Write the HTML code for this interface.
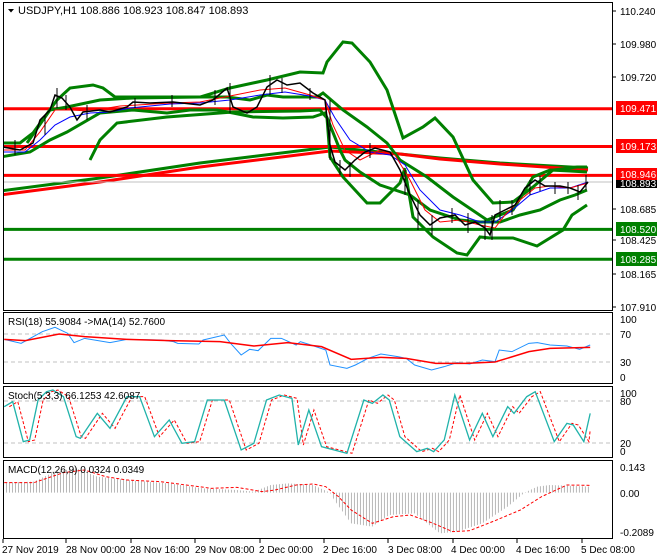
<!DOCTYPE html>
<html><head><meta charset="utf-8"><style>
html,body{margin:0;padding:0;background:#fff;}
svg{display:block;font-family:"Liberation Sans",sans-serif;}
</style></head><body>
<svg width="660" height="560" viewBox="0 0 660 560" xmlns="http://www.w3.org/2000/svg">
<defs>
<pattern id="hist" width="7.09" height="30" patternUnits="userSpaceOnUse"><rect x="0" y="0" width="2.36" height="30" fill="#b8b8b8"/></pattern>
<clipPath id="mc"><rect x="4" y="3" width="608" height="307"/></clipPath>
</defs>
<rect width="660" height="560" fill="#fff"/>
<rect x="3.5" y="2.5" width="609" height="308" fill="none" stroke="#000"/>
<rect x="3.5" y="312.5" width="609" height="71" fill="none" stroke="#000"/>
<rect x="3.5" y="386.5" width="609" height="71" fill="none" stroke="#000"/>
<rect x="3.5" y="460.5" width="609" height="78" fill="none" stroke="#000"/>

<g clip-path="url(#mc)" fill="none">
<polyline stroke="#008000" stroke-width="3" points="0,191 100,178 200,163 330,147 440,158 500,163 588,168"/>
<polyline stroke="#ff0000" stroke-width="3" points="0,195 100,182 200,167 330,151 400,154 440,159 500,164 588,170"/>
<line x1="0" y1="108.7" x2="612" y2="108.7" stroke="#ff0000" stroke-width="3"/>
<line x1="0" y1="146.5" x2="612" y2="146.5" stroke="#ff0000" stroke-width="3"/>
<line x1="0" y1="175.4" x2="612" y2="175.4" stroke="#ff0000" stroke-width="3"/>
<line x1="0" y1="182" x2="612" y2="182" stroke="#c0c0c0" stroke-width="1"/>
<line x1="0" y1="229.4" x2="612" y2="229.4" stroke="#008000" stroke-width="3"/>
<line x1="0" y1="259.3" x2="612" y2="259.3" stroke="#008000" stroke-width="3"/>
<polyline stroke="#008000" stroke-width="3" points="3,143 20,143 33,133 57,100 70,88 93,85 103,88 115,97 200,97 230,88 267,80 300,72 323,73 327,62 343,42 352,43 370,62 387,90 403,138 423,127 435,118 453,137 473,180 493,203 513,202 533,187 553,170 577,167 587,167"/>
<polyline stroke="#008000" stroke-width="3" points="90,160 100,140 117,123 167,117 233,112 300,111 320,110 327,118 330,157 343,177 367,203 380,203 400,183 405,168"/>
<polyline stroke="#008000" stroke-width="3" points="405,170 413,217 433,237 457,253 467,255 480,237 490,238 513,238 537,246 563,230 572,215 587,205"/>
<polyline stroke="#008000" stroke-width="3" points="27,143 50,110 67,107 100,100 133,98 200,97 227,97 250,100 267,95 283,97 317,97 323,93 343,110 367,127 387,143 400,160 427,177 453,197 487,220 513,210 533,177 550,170 570,171 587,172"/>
<polyline stroke="#008000" stroke-width="3" points="0,157 30,152 50,140 67,132 100,113 133,110 167,113 190,110 217,110 233,113 253,117 283,118 313,117 325,113 330,125 340,150 345,160 360,172 380,185 395,190 410,195 430,210 460,220 480,222 500,222 520,215 540,210 560,200 575,195 587,190"/>
<polyline stroke="#0000ff" stroke-width="1" points="3,152 25,152 40,140 55,125 70,117 90,113 110,112 130,108 170,104 200,103 230,100 260,95 285,92 310,96 325,100 335,118 350,140 370,152 390,155 405,165 420,190 440,210 460,215 480,222 495,222 510,212 530,195 550,188 570,188 588,182"/>
<polyline stroke="#ff0000" stroke-width="1" points="3,150 25,150 40,132 55,110 70,110 90,111 120,106 170,103 200,102 230,96 260,90 285,88 310,95 325,100 333,125 345,150 360,160 380,150 395,155 410,180 425,210 440,222 460,220 480,225 495,228 505,215 520,200 535,188 550,186 570,188 588,183"/>
<polyline stroke="#000" stroke-width="1.5" points="3,147 20,150 33,143 40,120 50,110 55,95 62,98 70,107 77,120 83,112 100,110 110,112 127,107 133,102 150,103 173,102 200,105 213,100 227,88 233,107 247,113 257,107 267,87 277,80 287,85 300,83 313,93 325,100 330,145 335,162 345,170 355,160 365,152 375,148 390,152 400,170 410,195 420,215 430,225 440,218 455,215 465,225 475,222 485,228 490,235 495,215 505,210 515,205 525,188 535,180 545,186 560,186 570,188 580,192 588,182"/>
<path stroke="#000" stroke-width="1" d="M15,140v15M45,115v20M57,88v20M66,95v15M87,105v15M135,98v10M172,95v12M215,90v15M230,83v30M270,75v20M282,78v15M310,88v12M330,100v60M340,160v15M350,162v15M370,143v15M405,170v25M418,200v30M432,215v20M452,208v15M468,213v20M485,220v20M492,215v25M500,200v20M512,200v15M530,180v15M540,176v15M555,182v12M568,182v12M578,185v15M586,175v15"/>
</g>

<path d="M8,9 l6,0 l-3,3.5z" fill="#000"/>
<text x="18" y="14" font-size="11" fill="#000">USDJPY,H1  108.886 108.923 108.847 108.893</text>

<g font-size="10" fill="#000">
<text x="620" y="15">110.240</text>
<text x="620" y="48">109.980</text>
<text x="620" y="81">109.720</text>
<text x="620" y="213">108.685</text>
<text x="620" y="244">108.425</text>
<text x="620" y="278">108.165</text>
<text x="620" y="311">107.910</text>
</g>
<g stroke="#000"><path d="M612,11h4M612,44h4M612,77h4M612,209h4M612,240h4M612,274h4M612,307h4"/></g>
<rect x="616" y="101" width="41" height="14" fill="#ff0000"/><text x="620" y="112" font-size="10" fill="#fff">109.471</text>
<rect x="616" y="139" width="41" height="14" fill="#ff0000"/><text x="620" y="150" font-size="10" fill="#fff">109.173</text>
<rect x="616" y="168" width="41" height="12" fill="#ff0000"/><text x="620" y="178" font-size="10" fill="#fff">108.946</text>
<rect x="616" y="180" width="41" height="8" fill="#000"/><text x="620" y="187" font-size="10" fill="#fff">108.893</text>
<rect x="616" y="222" width="41" height="14" fill="#008000"/><text x="620" y="233" font-size="10" fill="#fff">108.520</text>
<rect x="616" y="252" width="41" height="14" fill="#008000"/><text x="620" y="263" font-size="10" fill="#fff">108.285</text>

<!-- RSI -->
<g stroke="#c0c0c0" stroke-dasharray="4,3"><line x1="4" y1="334" x2="612" y2="334"/><line x1="4" y1="362" x2="612" y2="362"/></g>
<g transform="translate(0,300) scale(0.42308,0.33333)" fill="none">
<polyline vector-effect="non-scaling-stroke" stroke="#1e90ff" stroke-width="1" points="10,118 50,130 100,95 130,82 160,100 175,128 200,115 260,128 300,118 380,120 410,125 420,130 470,132 480,120 530,105 545,130 570,165 590,148 610,152 640,115 665,115 700,135 710,125 735,135 770,150 780,195 820,205 840,195 870,175 900,162 940,170 960,175 980,195 1020,210 1050,200 1080,188 1110,192 1140,180 1170,185 1180,150 1210,155 1250,130 1270,128 1300,135 1340,138 1370,148 1395,135"/>
<polyline vector-effect="non-scaling-stroke" stroke="#ff0000" stroke-width="1.5" points="10,118 60,122 140,102 200,110 300,118 400,122 520,125 600,138 680,128 760,140 830,178 900,172 960,175 1030,190 1100,190 1170,186 1250,155 1300,145 1395,142"/>
</g>
<text x="8" y="325" font-size="10">RSI(18) 55.9084  -&gt;MA(14) 52.7600</text>
<g font-size="10"><text x="620" y="323">100</text><text x="620" y="338">70</text><text x="620" y="366">30</text><text x="620" y="381">0</text></g>

<!-- Stoch -->
<g stroke="#c0c0c0" stroke-dasharray="4,3"><line x1="4" y1="401" x2="612" y2="401"/><line x1="4" y1="443" x2="612" y2="443"/></g>
<g transform="translate(0,300) scale(0.42308,0.33333)" fill="none">
<polyline vector-effect="non-scaling-stroke" stroke="#ff0000" stroke-width="1" stroke-dasharray="3,2" transform="translate(12,0)" points="10,320 30,305 55,425 70,420 90,300 110,275 125,270 150,290 180,410 190,415 230,340 260,385 300,290 330,290 365,410 400,360 430,430 460,425 490,300 530,300 570,450 600,430 630,300 660,285 690,295 705,435 730,330 760,440 790,450 820,460 860,300 880,310 905,285 920,300 945,410 985,455 1010,445 1025,455 1050,420 1075,285 1110,420 1140,340 1165,410 1200,320 1215,340 1245,290 1265,275 1310,425 1340,370 1355,375 1380,425 1383,390"/>
<polyline vector-effect="non-scaling-stroke" stroke="#20b2aa" stroke-width="1.3" points="10,320 30,305 55,425 70,420 90,300 110,275 125,270 150,290 180,410 190,415 230,340 260,385 300,290 330,290 365,410 400,360 430,430 460,425 490,300 530,300 570,450 600,430 630,300 660,285 690,295 705,435 730,330 760,440 790,450 820,460 860,300 880,310 905,285 920,300 945,410 985,455 1010,445 1025,455 1050,420 1075,285 1110,420 1140,340 1165,410 1200,320 1215,340 1245,290 1265,275 1310,425 1340,370 1355,375 1380,425 1395,340"/>
</g>
<text x="8" y="399" font-size="10">Stoch(5,3,3) 66.1253 42.6087</text>
<g font-size="10"><text x="620" y="397">100</text><text x="620" y="405">80</text><text x="620" y="447">20</text><text x="620" y="455">0</text></g>

<!-- MACD -->
<g transform="translate(0,300) scale(0.42308,0.33333)">
<polygon fill="url(#hist)" points="10,548 80,545 130,515 180,505 230,530 300,540 400,550 480,565 560,570 600,575 640,555 680,550 740,555 780,578 790,600 830,670 880,680 920,645 980,640 1040,700 1080,695 1140,670 1200,620 1240,578 1270,560 1300,555 1395,560 1395,578 10,578"/>
<polyline vector-effect="non-scaling-stroke" fill="none" stroke="#ff0000" stroke-width="1" stroke-dasharray="3,2" points="10,548 80,548 150,518 200,510 250,530 300,540 380,545 440,555 500,565 560,562 620,575 650,570 700,555 740,552 770,560 800,590 830,630 880,670 930,650 970,645 1020,668 1070,695 1110,692 1170,662 1230,630 1280,590 1340,555 1395,556"/>
</g>
<text x="8" y="473" font-size="10">MACD(12,26,9) 0.0324 0.0349</text>
<g font-size="10"><text x="620" y="471">0.143</text><text x="620" y="497">0.00</text><text x="620" y="536">-0.2089</text></g>

<!-- time axis -->
<g stroke="#000"><path d="M3,539v4M66,539v4M131,539v4M195,539v4M260,539v4M324,539v4M388,539v4M453,539v4M517,539v4M582,539v4"/></g>
<g font-size="10">
<text x="2" y="553">27 Nov 2019</text>
<text x="66" y="553">28 Nov 00:00</text>
<text x="130" y="553">28 Nov 16:00</text>
<text x="195" y="553">29 Nov 08:00</text>
<text x="259" y="553">2 Dec 00:00</text>
<text x="323" y="553">2 Dec 16:00</text>
<text x="388" y="553">3 Dec 08:00</text>
<text x="451" y="553">4 Dec 00:00</text>
<text x="516" y="553">4 Dec 16:00</text>
<text x="581" y="553">5 Dec 08:00</text>
</g>
</svg>
</body></html>
